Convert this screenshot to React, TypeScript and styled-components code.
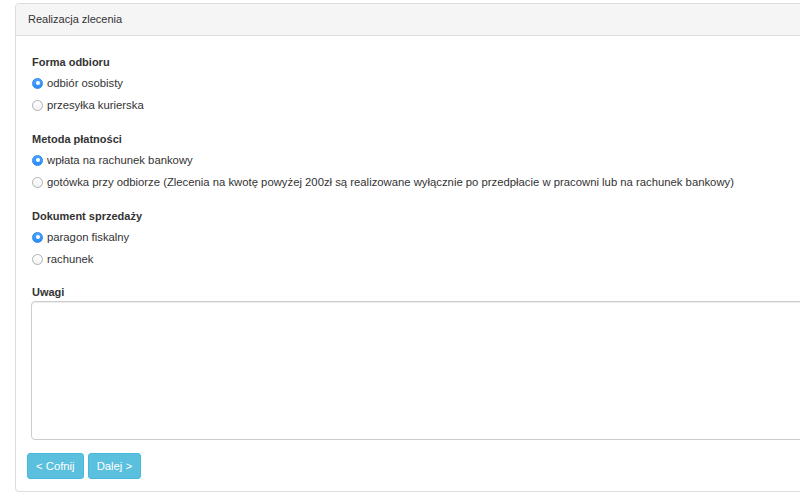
import { createGlobalStyle, styled } from "styled-components";

const GlobalStyle = createGlobalStyle`
  html, body {
    margin: 0;
    padding: 0;
    background: #ffffff;
    overflow: hidden;
  }
  body {
    font-family: "Liberation Sans", Arial, Helvetica, sans-serif;
    font-size: 11px;
    color: #333333;
  }
`;

const Page = styled.div`
  padding: 3px 0 0 15px;
  width: 830px;
`;

const Panel = styled.section`
  border: 1px solid #dddddd;
  border-radius: 4px;
  background: #ffffff;
  box-shadow: 0 1px 1px rgba(0, 0, 0, 0.04);
`;

const PanelHeading = styled.div`
  background: #f5f5f5;
  border-bottom: 1px solid #dddddd;
  border-radius: 3px 3px 0 0;
  height: 31px;
  line-height: 30px;
  padding: 0 12px;
  font-size: 11px;
  color: #333333;
`;

const PanelBody = styled.form`
  padding: 17px 11px 12px;
  display: flex;
  flex-direction: column;
`;

const Group = styled.fieldset`
  border: 0;
  margin: 0 0 14px;
  padding: 0 0 0 5px;
  min-width: 0;
`;

const GroupTitle = styled.legend`
  padding: 0;
  font-weight: bold;
  font-size: 11px;
  line-height: 18px;
  margin-bottom: 1px;
`;

const RadioRow = styled.label`
  display: flex;
  align-items: center;
  gap: 4px;
  height: 22px;
  font-size: 11.3px;
  white-space: nowrap;
  cursor: pointer;
`;

const RadioDot = styled.span<{ $checked?: boolean }>`
  box-sizing: border-box;
  width: 11px;
  height: 11px;
  border-radius: 50%;
  flex: none;
  display: flex;
  align-items: center;
  justify-content: center;
  background: ${(p) =>
    p.$checked ? "linear-gradient(#4aa5ff, #2b8cf5)" : "linear-gradient(#ffffff, #f2f2f2)"};
  border: 1px solid ${(p) => (p.$checked ? "#2a86ee" : "#b0b0b0")};

  &::after {
    content: "";
    display: ${(p) => (p.$checked ? "block" : "none")};
    width: 4px;
    height: 4px;
    border-radius: 50%;
    background: #ffffff;
  }
`;

const NotesLabel = styled.label`
  display: block;
  padding-left: 5px;
  font-weight: bold;
  line-height: 16px;
`;

const Notes = styled.textarea`
  box-sizing: border-box;
  display: block;
  margin: 1px 0 0 4px;
  width: calc(100% - 4px);
  height: 139px;
  border: 1px solid #cccccc;
  border-radius: 4px;
  box-shadow: inset 0 1px 1px rgba(0, 0, 0, 0.075);
  resize: none;
  font-family: inherit;
  font-size: 11px;
`;

const Actions = styled.div`
  display: flex;
  gap: 4px;
  margin-top: 13px;
`;

const Button = styled.button`
  height: 26px;
  padding: 0 8px;
  background: #5bc0de;
  border: 1px solid #46b8da;
  border-radius: 3px;
  color: #ffffff;
  font-family: inherit;
  font-size: 11.3px;
  cursor: pointer;
`;

type Option = { label: string; checked?: boolean };

const groups: { title: string; options: Option[] }[] = [
  {
    title: "Forma odbioru",
    options: [{ label: "odbiór osobisty", checked: true }, { label: "przesyłka kurierska" }],
  },
  {
    title: "Metoda płatności",
    options: [
      { label: "wpłata na rachunek bankowy", checked: true },
      {
        label:
          "gotówka przy odbiorze (Zlecenia na kwotę powyżej 200zł są realizowane wyłącznie po przedpłacie w pracowni lub na rachunek bankowy)",
      },
    ],
  },
  {
    title: "Dokument sprzedaży",
    options: [{ label: "paragon fiskalny", checked: true }, { label: "rachunek" }],
  },
];

export default function App() {
  return (
    <Page>
      <GlobalStyle />
      <Panel>
        <PanelHeading>Realizacja zlecenia</PanelHeading>
        <PanelBody>
          {groups.map((group) => (
            <Group key={group.title}>
              <GroupTitle>{group.title}</GroupTitle>
              {group.options.map((option) => (
                <RadioRow key={option.label}>
                  <RadioDot $checked={option.checked} />
                  {option.label}
                </RadioRow>
              ))}
            </Group>
          ))}
          <NotesLabel htmlFor="uwagi">Uwagi</NotesLabel>
          <Notes id="uwagi" />
          <Actions>
            <Button type="button">&lt; Cofnij</Button>
            <Button type="button">Dalej &gt;</Button>
          </Actions>
        </PanelBody>
      </Panel>
    </Page>
  );
}
